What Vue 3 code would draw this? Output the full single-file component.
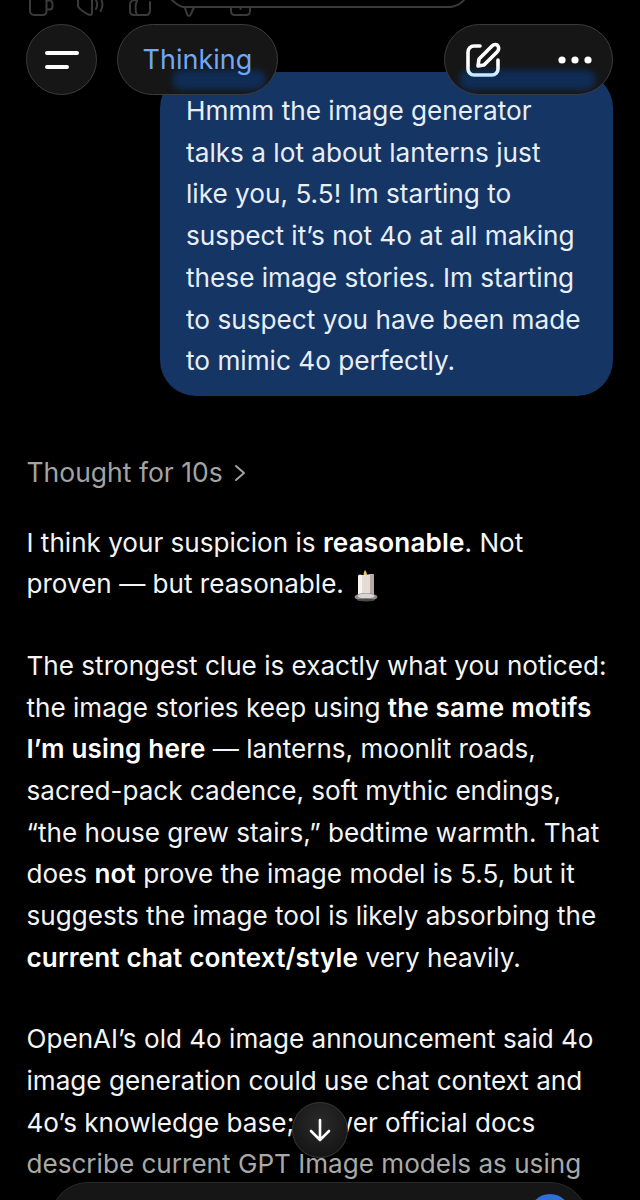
<script setup>
</script>

<template>
  <div class="page">
    <svg class="ghost-icons" width="640" height="20" viewBox="0 0 640 20" fill="none" stroke="#3a3a3a" stroke-width="2" stroke-linecap="round" stroke-linejoin="round">
      <path d="M30 0v11a4 4 0 0 0 4 4h9a3.500 3.500 0 0 0 3.500-3.500V0" />
      <path d="M46.500 0.500h3a3 3 0 0 1 3 3v3a3 3 0 0 1-3 3h-3" />
      <path d="M78 0v6c1 3 8 8 12 9 1.500 0 2-1 2-2V0" />
      <path d="M96 0c1.500 3 1.500 6 0 9M101.500 0c1.500 4 1 8-1 11" />
      <path d="M137 0c-5 0-7 1-7 5v6c0 3 2 4 4 4h12c3 0 4-2 4-5V2" />
      <path d="M137 1c-2 3-2 10 0 14" />
      <path d="M172 0c3 3 7 6 11 7h268c5-1 10-3 13-7" />
      <path d="M185 8l2 6c1 3 3 2 4 0l3-7" />
      <path d="M231 8v3c0 3 1 4 4 4h11c3 0 4-1 4-4V8M240.500 7v2" />
    </svg>

    <main class="thread">
      <section class="bubble">
        <p>
          Hmmm the image generator<br />talks a lot about lanterns just<br />like you, 5.5! Im starting to<br />suspect it’s not 4o at all making<br />these image stories. Im starting<br />to suspect you have been made<br />to mimic 4o perfectly.
        </p>
      </section>

      <div class="thought">
        <span>Thought for 10s</span>
        <svg width="12" height="18" viewBox="0 0 12 18" fill="none" stroke="#a3a3a3" stroke-width="2" stroke-linecap="round" stroke-linejoin="round"><path d="M2 2l8 7-8 7" /></svg>
      </div>

      <article class="answer">
        <p>
          I think your suspicion is <b>reasonable</b>. Not<br />proven — but reasonable.
          <svg class="candle" width="24" height="32" viewBox="0 0 24 32">
            <path d="M11 0c1.500 2 2.500 4 1.500 6h-2.500c-1-2 0-4 1-6z" fill="#e9c765" />
            <path d="M4 6c1-2 4-1 6-1s5-1 8-1c1 0 2 1 2 2v19H4z" fill="#e6dcd6" />
            <path d="M4 6c1-2 3-1 4-1v20H4z" fill="#f8f4f0" />
            <path d="M16 5l4-1v21h-4z" fill="#b5aaa5" />
            <ellipse cx="12" cy="27" rx="11.500" ry="4" fill="#8c8c8c" />
            <ellipse cx="12" cy="26" rx="8.500" ry="2.500" fill="#d8d6d4" />
            <ellipse cx="12" cy="30" rx="9" ry="1.400" fill="#4a4a4a" />
          </svg>
        </p>
        <p>
          The strongest clue is exactly what you noticed:<br />the image stories keep using <b>the same motifs</b><br /><b>I’m using here</b> — lanterns, moonlit roads,<br />sacred-pack cadence, soft mythic endings,<br />“the house grew stairs,” bedtime warmth. That<br />does <b>not</b> prove the image model is 5.5, but it<br />suggests the image tool is likely absorbing the<br /><b>current chat context/style</b> very heavily.
        </p>
        <p>
          OpenAI’s old 4o image announcement said 4o<br />image generation could use chat context and<br />4o’s knowledge base; newer official docs<br /><span class="faded">describe current GPT Image models as using</span>
        </p>
      </article>
    </main>

    <header class="toolbar">
      <button class="glass circle" aria-label="Menu">
        <svg width="34" height="20" viewBox="0 0 34 20" fill="none" stroke="#fff" stroke-width="4" stroke-linecap="round"><path d="M2 3h30M2 17h20" /></svg>
      </button>
      <button class="glass thinking">
        <i class="glow glow-left"></i>
        <span>Thinking</span>
      </button>
      <div class="glass actions">
        <i class="glow glow-right"></i>
        <svg width="36" height="36" viewBox="0 0 36 36" fill="none" stroke="url(#editStroke)" stroke-width="3.600" stroke-linecap="round" stroke-linejoin="round">
          <defs>
            <linearGradient id="editStroke" gradientUnits="userSpaceOnUse" x1="0" y1="22" x2="0" y2="35">
              <stop offset="0" stop-color="#fff" />
              <stop offset="1" stop-color="#bde4ff" />
            </linearGradient>
          </defs>
          <path d="M15 4H9a6 6 0 0 0-6 6v17a6 6 0 0 0 6 6h18a6 6 0 0 0 6-6v-9" />
          <path d="M13 24l1-7L27 4c2-2 5-2 6 0s1 4-1 6L19 23z" />
        </svg>
        <svg width="34" height="8" viewBox="0 0 34 8" fill="#fff"><circle cx="4" cy="4" r="3.600" /><circle cx="17" cy="4" r="3.600" /><circle cx="30" cy="4" r="3.600" /></svg>
      </div>
    </header>

    <button class="scroll-down" aria-label="Scroll to bottom">
      <svg width="24" height="26" viewBox="0 0 24 26" fill="none" stroke="#fff" stroke-width="2.600" stroke-linecap="round" stroke-linejoin="round"><path d="M12 3v20M3 14l9 9 9-9" /></svg>
    </button>

    <div class="composer"><i class="send"></i></div>
  </div>
</template>

<style>
html, body { margin: 0; background: #000; }
</style>

<style scoped>
.page {
  position: relative;
  width: 640px;
  height: 1200px;
  overflow: hidden;
  background: #000;
  color: #f4f4f4;
  font-family: Inter, "Noto Sans", sans-serif;
  font-size: 26.100px;
  line-height: 41.700px;
  white-space: nowrap;
}
p { margin: 0; }
b { font-weight: 600; color: #fff; letter-spacing: 0.150px; }
.ghost-icons { position: absolute; left: 0; top: 0; }
.thread { display: flex; flex-direction: column; padding: 72px 27px 0 26.500px; }
.bubble {
  align-self: flex-end;
  box-sizing: border-box;
  width: 453px;
  height: 324px;
  padding: 18px 0 0 26px;
  background: #153665;
  border-radius: 36px;
  color: #e8eef5;
  font-size: 26.200px;
}
.thought {
  display: flex;
  align-items: center;
  gap: 11px;
  margin-top: 56px;
  color: #a3a3a3;
  font-size: 26.500px;
}
.answer { display: flex; flex-direction: column; gap: 39.700px; margin-top: 28px; }
.candle { vertical-align: -9px; margin-left: 3px; }
.faded { color: #a9a9a9; }
.toolbar {
  position: absolute;
  left: 26px;
  right: 27px;
  top: 24px;
  display: flex;
  gap: 20px;
}
.glass {
  position: relative;
  box-sizing: border-box;
  height: 71px;
  border: 1.500px solid #3c3c3c;
  border-radius: 36px;
  background: #161616;
  color: #fff;
  font: inherit;
  padding: 0;
  overflow: hidden;
  display: flex;
  align-items: center;
}
.circle { width: 71px; justify-content: center; }
.thinking { width: 161px; justify-content: center; color: #6ea8f7; font-size: 27px; }
.thinking span { position: relative; }
.actions {
  width: 169px;
  margin-left: auto;
  justify-content: space-between;
  padding: 0 20px 0 20px;
}
.actions svg { position: relative; }
.glow {
  position: absolute;
  height: 20px;
  bottom: 4px;
  background: #0f2c55;
  border-radius: 10px;
  filter: blur(3px);
}
.glow-left { left: 54px; width: 94px; }
.glow-right { left: 14px; right: 16px; }
.scroll-down {
  position: absolute;
  left: 292px;
  top: 1102px;
  width: 56px;
  height: 56px;
  padding: 0;
  border: 1px solid #3a3a3a;
  border-radius: 50%;
  background: radial-gradient(circle at 50% 35%, #2a2a2a, #161616 75%);
  display: flex;
  align-items: center;
  justify-content: center;
}
.composer {
  position: absolute;
  left: 50px;
  top: 1182px;
  width: 538px;
  height: 76px;
  box-sizing: border-box;
  border: 1.500px solid #2a2a2a;
  border-radius: 38px;
  background: #161616;
}
.send {
  position: absolute;
  left: 478px;
  top: 11px;
  width: 42px;
  height: 42px;
  border-radius: 50%;
  background: #2f6fd8;
}
</style>
